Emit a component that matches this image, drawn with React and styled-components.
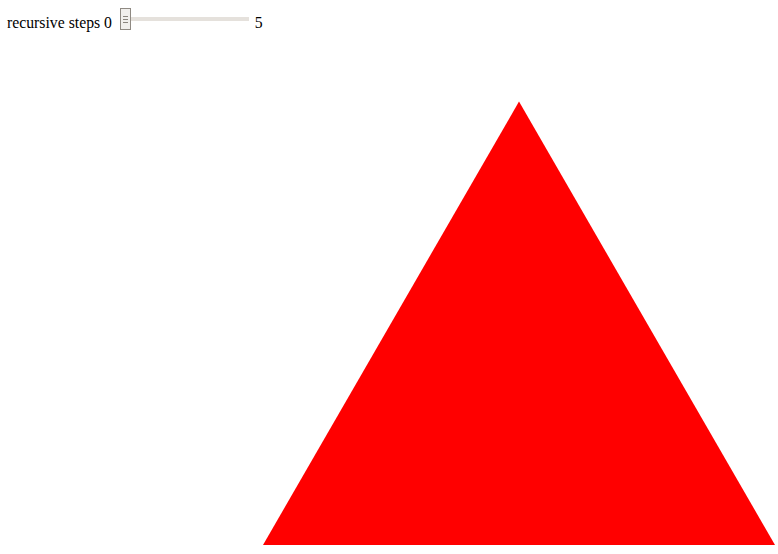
import React, { useState } from "react";
import styled, { createGlobalStyle } from "styled-components";

const Global = createGlobalStyle`
  html { overflow: hidden; }
  body {
    margin: 0;
    overflow: visible;
    background: #fff;
    color: #000;
    font-family: "Liberation Serif", "Times New Roman", serif;
    font-size: 16px;
  }
`;

const Page = styled.div`
  padding: 8px;
`;

const Controls = styled.div`
  height: 25px;
  white-space: nowrap;
  font-size: 15.75px;
  margin-left: -1px;
`;

const Range = styled.input`
  -webkit-appearance: none;
  appearance: none;
  width: 129px;
  height: 21px;
  margin: 0 2px 0 4px;
  padding: 0;
  background: transparent;
  vertical-align: -1px;
  outline: none;

  &::-webkit-slider-runnable-track {
    height: 4px;
    background: #e5e1dc;
    border: none;
  }
  &::-webkit-slider-thumb {
    -webkit-appearance: none;
    appearance: none;
    box-sizing: border-box;
    width: 11px;
    height: 22px;
    margin-top: -9px;
    border: 1px solid #8f8a83;
    background:
      linear-gradient(#8a857e, #8a857e) 2px 7px / 5px 1px no-repeat,
      linear-gradient(#8a857e, #8a857e) 2px 10px / 5px 1px no-repeat,
      linear-gradient(#8a857e, #8a857e) 2px 13px / 5px 1px no-repeat,
      #f1efec;
  }
`;

const Canvas = styled.svg`
  display: block;
  width: 770px;
  height: 513px;
  overflow: visible;
`;

function Triangle({ x, y, size, depth }) {
  const h = (size * Math.sqrt(3)) / 2;
  if (depth === 0) {
    return (
      <polygon
        points={`${x},${y} ${x + size},${y} ${x + size / 2},${y - h}`}
        fill="#ff0000"
      />
    );
  }
  const s = size / 2;
  return (
    <g>
      <Triangle x={x} y={y} size={s} depth={depth - 1} />
      <Triangle x={x + s} y={y} size={s} depth={depth - 1} />
      <Triangle x={x + s / 2} y={y - (s * Math.sqrt(3)) / 2} size={s} depth={depth - 1} />
    </g>
  );
}

export default function App() {
  const [steps, setSteps] = useState(0);
  return (
    <Page>
      <Global />
      <Controls>
        recursive steps 0{" "}
        <Range
          type="range"
          min={0}
          max={5}
          value={steps}
          onChange={(e) => setSteps(Number(e.target.value))}
        />{" "}
        5
      </Controls>
      <Canvas>
        <Triangle x={255} y={512} size={512} depth={steps} />
      </Canvas>
    </Page>
  );
}
